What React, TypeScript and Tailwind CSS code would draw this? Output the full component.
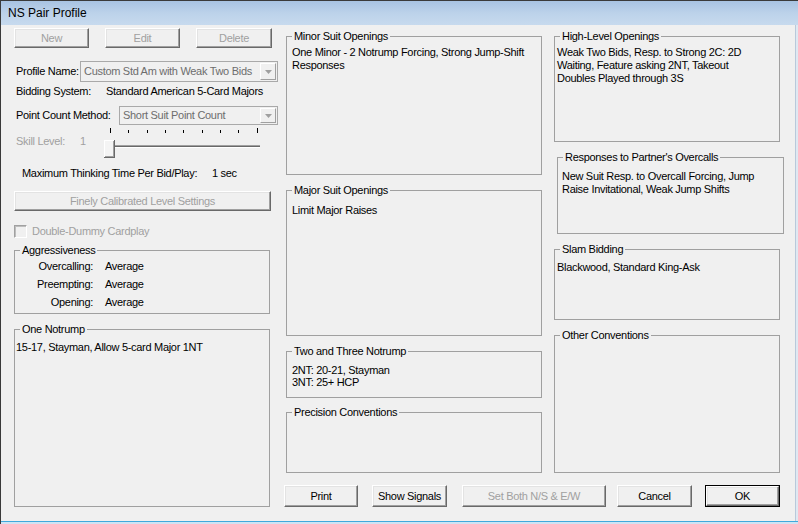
import type { ReactNode } from 'react';

function Btn({
  children,
  className = '',
  disabled = false,
}: {
  children: ReactNode;
  className?: string;
  disabled?: boolean;
}) {
  return (
    <div
      className={`flex items-center justify-center bg-[#f0f0f0] border border-t-white border-l-white border-r-[#696969] border-b-[#696969] shadow-[inset_-1px_-1px_0_#a0a0a0,inset_1px_1px_0_#e3e3e3] leading-none whitespace-nowrap ${
        disabled ? 'text-[#a0a0a0]' : 'text-black'
      } ${className}`}
    >
      {children}
    </div>
  );
}

function Combo({ text, className = '' }: { text: string; className?: string }) {
  return (
    <div className={`flex border border-[#a9a9a9] bg-[#f0f0f0] ${className}`}>
      <div className="flex-1 min-w-0 pl-[3px] flex items-center text-[#6d6d6d] whitespace-nowrap overflow-hidden">
        {text}
      </div>
      <div className="w-[16px] m-[1px] flex items-center justify-center border border-t-white border-l-white border-r-[#a0a0a0] border-b-[#a0a0a0] bg-[#f0f0f0]">
        <svg width="7" height="4" viewBox="0 0 7 4">
          <path d="M0 0h7L3.5 4z" fill="#a0a0a0" />
        </svg>
      </div>
    </div>
  );
}

function Group({
  title,
  className = '',
  bodyClass = '',
  children,
}: {
  title: string;
  className?: string;
  bodyClass?: string;
  children?: ReactNode;
}) {
  return (
    <fieldset className={`border border-[#a0a0a0] p-0 m-0 min-w-0 ${className}`}>
      <legend className="ml-[5px] px-[2px] leading-[14px]">{title}</legend>
      <div className={bodyClass}>{children}</div>
    </fieldset>
  );
}

function Slider() {
  const ticks = [8, 26, 45, 63, 81, 100, 118, 136, 155];
  return (
    <svg width="160" height="31" viewBox="0 0 160 31">
      {ticks.map((x, i) => (
        <rect
          key={x}
          x={x}
          y={i === 0 || i === ticks.length - 1 ? 1 : 3}
          width="1"
          height={i === 0 || i === ticks.length - 1 ? 5 : 3}
          fill="#000"
        />
      ))}
      <rect x="12" y="18" width="146" height="1" fill="#a0a0a0" />
      <rect x="12" y="19" width="146" height="1" fill="#696969" />
      <rect x="12" y="20" width="146" height="1" fill="#fff" />
      {/* thumb */}
      <rect x="2" y="13" width="11" height="18" fill="#696969" />
      <rect x="2" y="13" width="10" height="17" fill="#fff" />
      <rect x="3" y="14" width="9" height="16" fill="#a0a0a0" />
      <rect x="3" y="14" width="8" height="15" fill="#f4f4f4" />
    </svg>
  );
}

export default function App() {
  return (
    <div className="w-[798px] h-[524px] overflow-hidden bg-[#f0f0f0] font-['Liberation_Sans',Arial,sans-serif] text-[11px] text-black flex flex-col border-l border-[#3a3a3a]">
      {/* Title bar */}
      <div className="h-[25px] shrink-0 flex items-center pl-[7px] border-t border-[#3a3a3a] bg-gradient-to-b from-[#a8c3e2] via-[#bcd2ea] to-[#c7daee] text-[12px]">
        NS Pair Profile
      </div>

      <div className="flex-1 flex pl-[13px] tracking-[-0.3px]">
        {/* Left column */}
        <div className="flex flex-col w-[264px]">
          <div className="mt-[3px] flex gap-[16px]">
            <Btn disabled className="w-[75px] h-[20px]">New</Btn>
            <Btn disabled className="w-[75px] h-[20px]">Edit</Btn>
            <Btn disabled className="w-[76px] h-[20px]">Delete</Btn>
          </div>

          <div className="mt-[13px] flex items-center h-[21px]">
            <span className="ml-[2px] w-[64px] whitespace-nowrap">Profile Name:</span>
            <Combo className="w-[198px] h-[21px]" text="Custom Std Am with Weak Two Bids" />
          </div>

          <div className="mt-[2px] flex h-[14px] leading-[14px]">
            <span className="ml-[2px] w-[90px]">Bidding System:</span>
            <span className="whitespace-nowrap">Standard American 5-Card Majors</span>
          </div>

          <div className="mt-[8px] flex items-center h-[19px]">
            <span className="ml-[2px] w-[103px] whitespace-nowrap">Point Count Method:</span>
            <Combo className="w-[159px] h-[19px]" text="Short Suit Point Count" />
          </div>

          <div className="mt-[2px] flex h-[31px]">
            <span className="ml-[2px] mt-[7px] w-[64px] h-[14px] leading-[14px] text-[#a0a0a0]">Skill Level:</span>
            <span className="mt-[7px] w-[22px] h-[14px] leading-[14px] text-[#a0a0a0]">1</span>
            <Slider />
          </div>

          <div className="mt-[8px] flex h-[14px] leading-[14px]">
            <span className="ml-[8px] w-[190px] whitespace-nowrap">Maximum Thinking Time Per Bid/Play:</span>
            <span>1 sec</span>
          </div>

          <Btn disabled className="mt-[11px] w-[257px] h-[20px]">
            Finely Calibrated Level Settings
          </Btn>

          <div className="mt-[13px] flex items-center h-[14px]">
            <div className="w-[13px] h-[13px] border border-t-[#a0a0a0] border-l-[#a0a0a0] border-r-white border-b-white bg-[#f0f0f0] shadow-[inset_1px_1px_0_#bdbdbd]" />
            <span className="ml-[5px] text-[#a0a0a0]">Double-Dummy Cardplay</span>
          </div>

          <Group title="Aggressiveness" className="mt-[5px] w-[256px] h-[71px]" bodyClass="leading-[18px]">
            {[
              ['Overcalling:', 'Average'],
              ['Preempting:', 'Average'],
              ['Opening:', 'Average'],
            ].map(([k, v]) => (
              <div key={k} className="flex">
                <span className="w-[78px] text-right">{k}</span>
                <span className="ml-[12px]">{v}</span>
              </div>
            ))}
          </Group>

          <Group title="One Notrump" className="mt-[8px] w-[256px] h-[185px]" bodyClass="pt-[4px] pl-[1px] leading-[14px]">
            15-17, Stayman, Allow 5-card Major 1NT
          </Group>
        </div>

        {/* Middle + right */}
        <div className="ml-[6px] flex flex-col">
          <div className="flex">
            <div className="ml-[2px] w-[256px] flex flex-col">
              <Group title="Minor Suit Openings" className="mt-[4px] h-[146px]" bodyClass="pt-[3px] pl-[5px] leading-[13px]">
                <div>One Minor - 2 Notrump Forcing, Strong Jump-Shift</div>
                <div>Responses</div>
              </Group>
              <Group title="Major Suit Openings" className="mt-[8px] h-[153px]" bodyClass="pt-[7px] pl-[5px] leading-[13px]">
                Limit Major Raises
              </Group>
              <Group title="Two and Three Notrump" className="mt-[8px] h-[54px]" bodyClass="pt-[6px] pl-[5px] leading-[12px]">
                <div>2NT: 20-21, Stayman</div>
                <div>3NT: 25+ HCP</div>
              </Group>
              <Group title="Precision Conventions" className="mt-[7px] h-[68px]" />
            </div>

            <div className="ml-[12px] w-[226px] flex flex-col">
              <Group title="High-Level Openings" className="mt-[4px] h-[113px]" bodyClass="pt-[3px] pl-[2px] leading-[13px]">
                <div>Weak Two Bids, Resp. to Strong 2C: 2D</div>
                <div>Waiting, Feature asking 2NT, Takeout</div>
                <div>Doubles Played through 3S</div>
              </Group>
              <Group title="Responses to Partner's Overcalls" className="mt-[8px] ml-[3px] w-[227px] h-[84px]" bodyClass="pt-[6px] pl-[4px] leading-[13px]">
                <div>New Suit Resp. to Overcall Forcing, Jump</div>
                <div>Raise Invitational, Weak Jump Shifts</div>
              </Group>
              <Group title="Slam Bidding" className="mt-[8px] h-[78px]" bodyClass="pt-[5px] pl-[2px] leading-[13px]">
                Blackwood, Standard King-Ask
              </Group>
              <Group title="Other Conventions" className="mt-[8px] h-[145px]" />
            </div>
          </div>

          <div className="mt-[12px] flex h-[22px]">
            <Btn className="w-[74px] h-[22px]">Print</Btn>
            <Btn className="ml-[14px] w-[75px] h-[22px]">Show Signals</Btn>
            <Btn disabled className="ml-[15px] w-[144px] h-[22px]">Set Both N/S &amp; E/W</Btn>
            <Btn className="ml-[11px] w-[75px] h-[22px]">Cancel</Btn>
            <div className="ml-[13px] w-[75px] h-[22px] border border-black">
              <Btn className="w-full h-full">OK</Btn>
            </div>
          </div>
        </div>

        <div className="ml-auto w-[3px] border-l border-[#b9c9da] bg-[#dfe8f2]" />
      </div>

      <div className="h-[3px] shrink-0 border-t border-[#3fa9dc] bg-[#cfe3f3]" />
    </div>
  );
}
